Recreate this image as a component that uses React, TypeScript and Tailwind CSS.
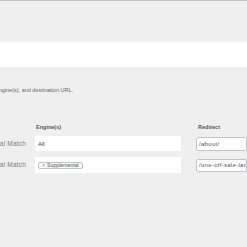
const rows = [
  { match: "Partial Match", engines: "All", chips: [] as string[], redirect: "/about/" },
  { match: "Partial Match", engines: "", chips: ["Supplemental"], redirect: "/one-off-sale-landing-page/" },
];

export default function App() {
  return (
    <div className="w-[247px] h-[247px] overflow-hidden bg-[#efefef] text-[5.5px] leading-[8px] text-[#646970] [font-family:'Liberation_Sans',Arial,sans-serif]">
      {/* top bar */}
      <div className="h-px bg-[#b6cab8]" />
      <div className="h-[41px] border-b border-[#f4f4f4]" />
      <div className="h-[25px] bg-white" />

      {/* description */}
      <div className="mt-[19px] flex justify-end w-[73px] whitespace-nowrap">
        <span>Choose a match type, search engine(s), and destination URL.</span>
      </div>

      {/* table */}
      <div className="mt-[29px] grid grid-cols-[35px_146px_15px_1fr] whitespace-nowrap">
        <div />
        <div className="pl-[1px] font-bold text-[#50575e]">Engine(s)</div>
        <div />
        <div className="pl-[2px] font-bold text-[#50575e]">Redirect</div>
      </div>

      <div className="mt-[5px] flex flex-col gap-[6px]">
        {rows.map((r, i) => (
          <div key={i} className="grid grid-cols-[35px_146px_15px_1fr] items-center whitespace-nowrap">
            <div className="flex justify-end w-[26px] overflow-visible">
              <span className="text-[6.5px] tracking-[0.2px] text-[#787c82]">{r.match}</span>
            </div>
            <div className={`bg-white flex items-center px-[3px] ${r.chips.length ? "h-4" : "h-[15px]"}`}>
              {r.engines && <span className="text-[6px] text-[#3c434a]">{r.engines}</span>}
              {r.chips.map((c) => (
                <span
                  key={c}
                  className="flex items-center gap-[2px] h-[7px] px-[3px] rounded-[2px] border border-[#c3c4c7] bg-[#f6f7f7] text-[#50575e] text-[5.2px] leading-[6px]"
                >
                  <span className="text-[#8c8f94]">×</span>
                  {c}
                </span>
              ))}
            </div>
            <div />
            <div className={`bg-white border border-[#c3c4c7] rounded-[2px] flex items-center px-[2px] overflow-hidden ${i === 0 ? "h-[14px]" : "h-[13px]"}`}>
              <span className="text-[6px] tracking-[0.3px] text-[#50575e]">{r.redirect}</span>
            </div>
          </div>
        ))}
      </div>
    </div>
  );
}
